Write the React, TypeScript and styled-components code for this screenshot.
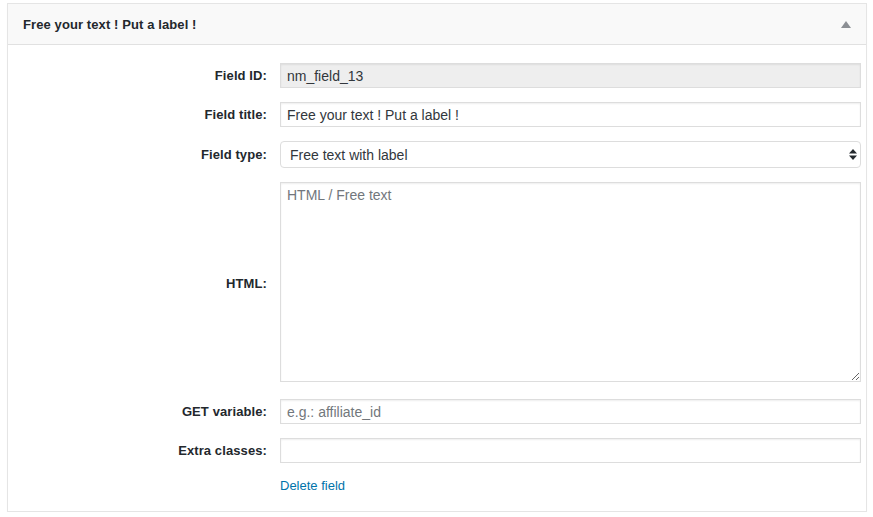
import React from "react";
import styled, { createGlobalStyle } from "styled-components";

const Global = createGlobalStyle`
  html, body { margin: 0; padding: 0; background: #ffffff; }
  body { font-family: "Liberation Sans", Arial, sans-serif; color: #23282d; }
  * { box-sizing: border-box; }
`;

const Page = styled.div`
  padding: 3px 6px 0 7px;
`;

const Panel = styled.section`
  border: 1px solid #e5e5e5;
  box-shadow: 0 1px 1px rgba(0, 0, 0, 0.04);
  background: #fff;
`;

const Header = styled.header`
  height: 41px;
  display: flex;
  align-items: center;
  justify-content: space-between;
  padding: 0 15px 0 15px;
  background: #f9f9f9;
  border-bottom: 1px solid #e1e1e1;
`;

const Title = styled.h3`
  margin: 0;
  font-size: 13px;
  font-weight: 700;
  letter-spacing: 0.1px;
  color: #23282d;
`;

const Toggle = styled.span`
  width: 0;
  height: 0;
  border-left: 5px solid transparent;
  border-right: 5px solid transparent;
  border-bottom: 7px solid #8c8f94;
`;

const Body = styled.div`
  display: grid;
  grid-template-columns: 259px 1fr;
  column-gap: 13px;
  row-gap: 14px;
  align-items: center;
  padding: 18px 5px 15px 0;
`;

const Label = styled.label`
  text-align: right;
  font-size: 13px;
  font-weight: 700;
  letter-spacing: 0.1px;
  color: #23282d;
`;

const Input = styled.input<{ $readonly?: boolean }>`
  width: 100%;
  height: 25px;
  padding: 0 6px;
  font: 14px "Liberation Sans", Arial, sans-serif;
  color: #32373c;
  border: 1px solid #ddd;
  border-radius: 0;
  background: ${(p) => (p.$readonly ? "#eeeeee" : "#fff")};
  box-shadow: inset 0 1px 2px rgba(0, 0, 0, 0.07);
  outline: none;
  &::placeholder { color: #72777c; }
`;

const SelectWrap = styled.div`
  position: relative;
  height: 27px;
`;

const Select = styled.select`
  appearance: none;
  width: 100%;
  height: 27px;
  padding: 0 24px 0 9px;
  font: 14px "Liberation Sans", Arial, sans-serif;
  color: #32373c;
  background: #fff;
  border: 1px solid #ddd;
  border-radius: 4px;
  outline: none;
`;

const Arrows = styled.svg`
  position: absolute;
  right: 4px;
  top: 8px;
  pointer-events: none;
`;

const TextArea = styled.textarea`
  display: block;
  width: 100%;
  height: 200px;
  margin-bottom: 3px;
  padding: 3px 6px;
  font: 14px/1.4 "Liberation Sans", Arial, sans-serif;
  color: #32373c;
  border: 1px solid #ddd;
  border-radius: 0;
  box-shadow: inset 0 1px 2px rgba(0, 0, 0, 0.07);
  outline: none;
  resize: vertical;
  &::placeholder { color: #72777c; }
`;

const Spacer = styled.span``;

const DeleteLink = styled.a`
  font-size: 13px;
  line-height: 20px;
  color: #0073aa;
  text-decoration: none;
  margin-top: -1px;
`;

export default function App() {
  return (
    <>
      <Global />
      <Page>
        <Panel>
          <Header>
            <Title>Free your text ! Put a label !</Title>
            <Toggle />
          </Header>
          <Body>
            <Label>Field ID:</Label>
            <Input $readonly readOnly defaultValue="nm_field_13" />
            <Label>Field title:</Label>
            <Input defaultValue="Free your text ! Put a label !" />
            <Label>Field type:</Label>
            <SelectWrap>
              <Select defaultValue="free">
                <option value="free">Free text with label</option>
              </Select>
              <Arrows width="8" height="11" viewBox="0 0 8 11">
                <path d="M4 0 L8 4.5 L0 4.5 Z" fill="#23282d" />
                <path d="M0 6.5 L8 6.5 L4 11 Z" fill="#23282d" />
              </Arrows>
            </SelectWrap>
            <Label>HTML:</Label>
            <TextArea placeholder="HTML / Free text" />
            <Label>GET variable:</Label>
            <Input placeholder="e.g.: affiliate_id" />
            <Label>Extra classes:</Label>
            <Input />
            <Spacer />
            <DeleteLink href="#">Delete field</DeleteLink>
          </Body>
        </Panel>
      </Page>
    </>
  );
}
